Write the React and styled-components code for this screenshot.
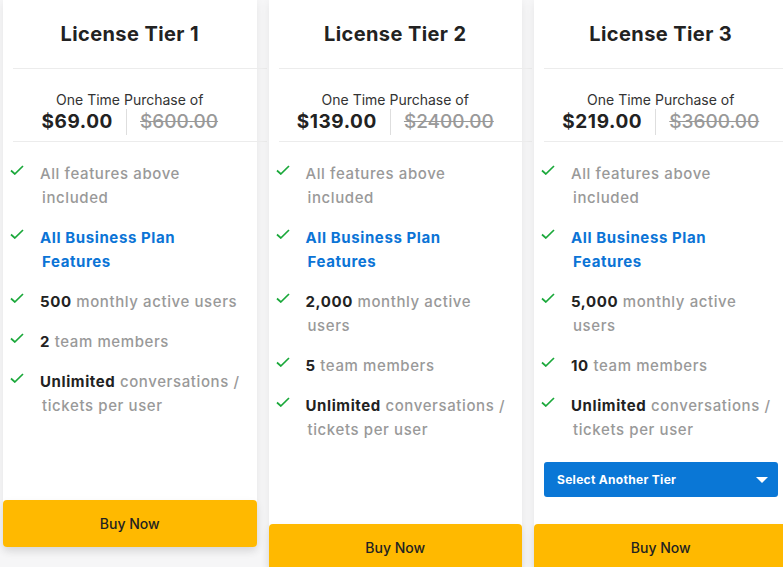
import styled, { createGlobalStyle } from 'styled-components';

const GlobalStyle = createGlobalStyle`
  body {
    margin: 0;
    background: #f6f6f7;
    font-family: Inter, "Open Sans", Arial, sans-serif;
    overflow: hidden;
  }
`;

const tiers = [
  {
    name: 'License Tier 1',
    price: '$69.00',
    oldPrice: '$600.00',
    users: '500',
    members: '2',
  },
  {
    name: 'License Tier 2',
    price: '$139.00',
    oldPrice: '$2400.00',
    users: '2,000',
    members: '5',
  },
  {
    name: 'License Tier 3',
    price: '$219.00',
    oldPrice: '$3600.00',
    users: '5,000',
    members: '10',
    select: true,
  },
];

function Check() {
  return (
    <CheckIcon viewBox='0 0 14 10'>
      <polyline points='1,5.5 4.8,9 13,1' />
    </CheckIcon>
  );
}

function Feature({ children }) {
  return (
    <Item>
      <Check />
      <ItemText>{children}</ItemText>
    </Item>
  );
}

function TierCard({ tier }) {
  const { name, price, oldPrice, users, members, select } = tier;
  return (
    <Card>
      <Title>{name}</Title>
      <Divider />
      <PriceBlock>
        <PriceLabel>One Time Purchase of</PriceLabel>
        <PriceRow>
          <Price>{price}</Price>
          <OldPrice>{oldPrice}</OldPrice>
        </PriceRow>
      </PriceBlock>
      <Divider />
      <Features>
        <Feature>All features above included</Feature>
        <Feature>
          <Highlight>All Business Plan Features</Highlight>
        </Feature>
        <Feature>
          <Strong>{users}</Strong> monthly active users
        </Feature>
        <Feature>
          <Strong>{members}</Strong> team members
        </Feature>
        <Feature>
          <Strong>Unlimited</Strong> conversations / tickets per user
        </Feature>
      </Features>
      <CardFooter>
        {select && (
          <TierSelect>
            <span>Select Another Tier</span>
            <Caret />
          </TierSelect>
        )}
      </CardFooter>
      <BuyButton>Buy Now</BuyButton>
    </Card>
  );
}

export default function App() {
  return (
    <>
      <GlobalStyle />
      <Row>
        {tiers.map((tier) => (
          <TierCard key={tier.name} tier={tier} />
        ))}
      </Row>
    </>
  );
}

const Row = styled.div`
  display: flex;
  align-items: flex-start;
  gap: 12px;
  padding-left: 3px;
`;

const Card = styled.div`
  width: 253.5px;
  flex-shrink: 0;
  display: flex;
  flex-direction: column;
  background: #fff;
  border-radius: 0 0 4px 4px;
  box-shadow: 0 3px 10px rgba(0, 0, 0, 0.07);
`;

const Title = styled.h2`
  margin: 0;
  height: 68px;
  display: flex;
  align-items: center;
  justify-content: center;
  font-size: 20px;
  font-weight: 700;
  letter-spacing: 0.4px;
  color: #222;
`;

const Divider = styled.div`
  height: 1px;
  background: #ececec;
  margin: 0 -10px 0 10px;
`;

const PriceBlock = styled.div`
  height: 72px;
  box-sizing: border-box;
  padding-top: 22px;
  display: flex;
  flex-direction: column;
  align-items: center;
`;

const PriceLabel = styled.div`
  font-size: 14px;
  line-height: 18px;
  color: #333;
`;

const PriceRow = styled.div`
  display: flex;
  align-items: center;
  line-height: 26px;
  font-size: 19px;
`;

const Price = styled.span`
  font-weight: 700;
  letter-spacing: 0.6px;
  color: #222;
  padding-right: 13px;
  border-right: 1px solid #dedede;
`;

const OldPrice = styled.span`
  padding-left: 13px;
  color: #999;
  font-weight: 500;
  text-decoration: line-through;
`;

const Features = styled.ul`
  list-style: none;
  margin: 0;
  padding: 20px 13px 0 7px;
  display: flex;
  flex-direction: column;
  gap: 16px;
`;

const Item = styled.li`
  display: flex;
  align-items: flex-start;
`;

const CheckIcon = styled.svg`
  width: 14px;
  height: 10px;
  margin-top: 3px;
  flex-shrink: 0;
  fill: none;
  stroke: #1aa83a;
  stroke-width: 1.7;
`;

const ItemText = styled.span`
  margin-left: 16px;
  padding-left: 2px;
  text-indent: -2px;
  font-size: 15px;
  line-height: 24px;
  font-weight: 500;
  letter-spacing: 0.6px;
  color: #999;
`;

const Strong = styled.b`
  font-weight: 700;
  color: #222;
`;

const Highlight = styled.span`
  font-weight: 700;
  color: #0b74d6;
`;

const CardFooter = styled.div`
  height: 82px;
  box-sizing: border-box;
  padding: 20px 10px 0;
`;

const TierSelect = styled.div`
  height: 35px;
  box-sizing: border-box;
  padding: 0 10px 0 13px;
  display: flex;
  align-items: center;
  justify-content: space-between;
  background: #0a77d6;
  border-radius: 3px;
  color: #fff;
  font-size: 12px;
  font-weight: 700;
  letter-spacing: 0.3px;
`;

const Caret = styled.span`
  width: 0;
  height: 0;
  border-left: 6px solid transparent;
  border-right: 6px solid transparent;
  border-top: 6px solid #fff;
`;

const BuyButton = styled.button`
  height: 47px;
  border: 0;
  border-radius: 4px;
  background: #ffb900;
  color: #222;
  font-family: inherit;
  font-size: 14px;
  font-weight: 500;
  cursor: pointer;
  box-shadow: 0 4px 10px rgba(0, 0, 0, 0.08);
`;
